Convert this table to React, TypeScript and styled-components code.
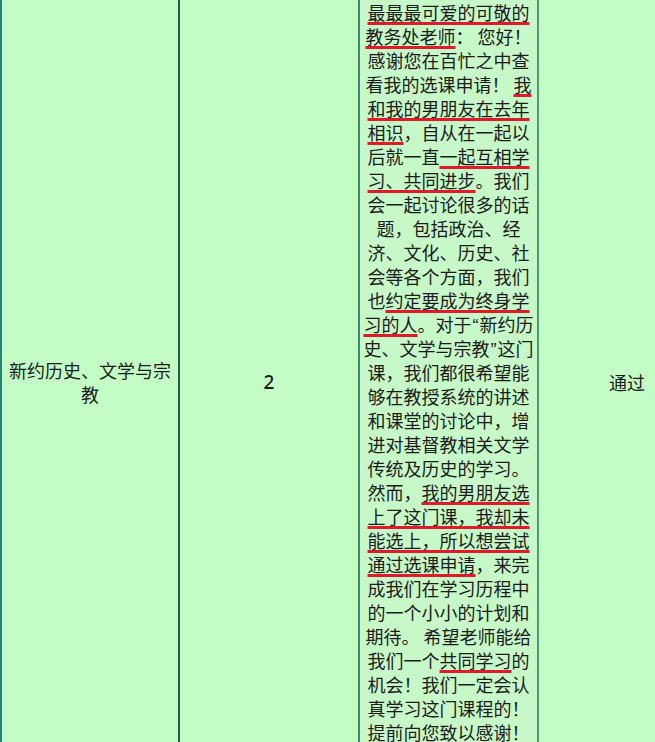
import React from "react";
import styled, { createGlobalStyle } from "styled-components";

const GlobalStyle = createGlobalStyle`
  html, body {
    margin: 0;
    padding: 0;
    background: #c3fdc5;
    overflow: hidden;
  }
  body {
    font-family: "Noto Sans CJK SC", "Noto Sans", sans-serif;
    color: #1b1b1b;
  }
`;

const Viewport = styled.div`
  width: 655px;
  height: 742px;
  overflow: hidden;
`;

const Row = styled.div`
  display: grid;
  grid-template-columns: 178px 180px 179px 178px;
  width: max-content;
  background: #c3fdc5;
`;

const Cell = styled.div<{ $border: string }>`
  border-left: 2px solid ${(p) => p.$border};
  display: flex;
  align-items: center;
  justify-content: center;
  text-align: center;
  font-size: 18px;
  line-height: 24px;
`;

const Number = styled.span`
  font-size: 19px;
  font-family: "Noto Sans", "Noto Sans CJK SC", sans-serif;
  font-weight: 500;
  color: #1a1a1a;
`;

const Letter = styled(Cell)`
  flex-direction: column;
  justify-content: flex-start;
  padding-bottom: 20px;
  background: #c7f8c8;
`;

const Line = styled.div`
  white-space: nowrap;
  height: 24px;
`;

const Quote = styled.span`
  font-family: "Liberation Sans", sans-serif;
  margin: 0 1px;
`;

const Mark = styled.span`
  text-decoration: underline;
  text-decoration-color: #e01a2a;
  text-decoration-thickness: 3px;
  text-underline-offset: 2px;
  text-decoration-skip-ink: none;
`;

type Seg = string | { u: string } | { q: string };

const lines: Seg[][] = [
  [{ u: "最最最可爱的可敬的" }],
  [{ u: "教务处老师" }, "： 您好！"],
  ["感谢您在百忙之中查"],
  ["看我的选课申请！ ", { u: "我" }],
  [{ u: "和我的男朋友在去年" }],
  [{ u: "相识" }, "，自从在一起以"],
  ["后就一直", { u: "一起互相学" }],
  [{ u: "习、共同进步" }, "。我们"],
  ["会一起讨论很多的话"],
  ["题，包括政治、经"],
  ["济、文化、历史、社"],
  ["会等各个方面，我们"],
  ["也", { u: "约定要成为终身学" }],
  [{ u: "习的人" }, "。对于", { q: "“" }, "新约历"],
  ["史、文学与宗教", { q: "”" }, "这门"],
  ["课，我们都很希望能"],
  ["够在教授系统的讲述"],
  ["和课堂的讨论中，增"],
  ["进对基督教相关文学"],
  ["传统及历史的学习。"],
  ["然而，", { u: "我的男朋友选" }],
  [{ u: "上了这门课，我却未" }],
  [{ u: "能选上，所以想尝试" }],
  [{ u: "通过选课申请" }, "，来完"],
  ["成我们在学习历程中"],
  ["的一个小小的计划和"],
  ["期待。 希望老师能给"],
  ["我们一个", { u: "共同学习" }, "的"],
  ["机会！我们一定会认"],
  ["真学习这门课程的！"],
  ["提前向您致以感谢！"],
];

const renderSeg = (s: Seg, j: number) => {
  if (typeof s === "string") return <React.Fragment key={j}>{s}</React.Fragment>;
  if ("u" in s) return <Mark key={j}>{s.u}</Mark>;
  return <Quote key={j}>{s.q}</Quote>;
};

export default function App() {
  return (
    <>
      <GlobalStyle />
      <Viewport>
        <Row>
          <Cell $border="#2c8574">
            <div>
              新约历史、文学与宗
              <br />
              教
            </div>
          </Cell>
          <Cell $border="#1d5a4a">
            <Number>2</Number>
          </Cell>
          <Letter $border="#348a78">
            {lines.map((segs, i) => (
              <Line key={i}>{segs.map(renderSeg)}</Line>
            ))}
          </Letter>
          <Cell $border="#4e9c7c">通过</Cell>
        </Row>
      </Viewport>
    </>
  );
}
